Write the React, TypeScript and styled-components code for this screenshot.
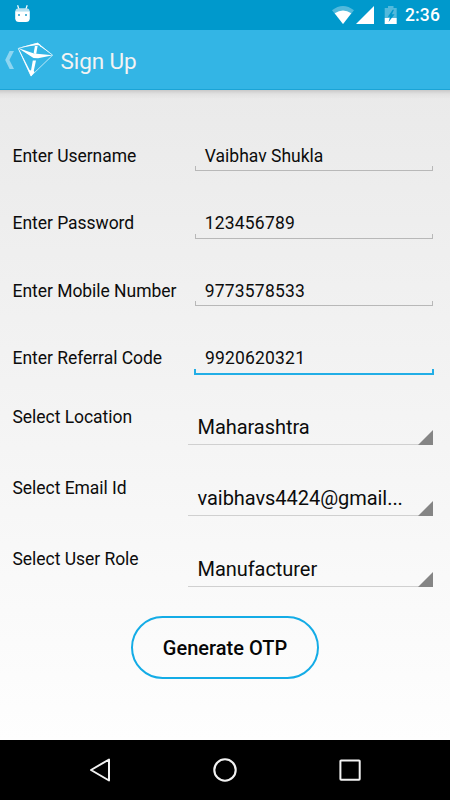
import React from "react";
import styled, { createGlobalStyle } from "styled-components";

const GlobalStyle = createGlobalStyle`
  * { box-sizing: border-box; }
  body { margin: 0; background: #000; font-family: Roboto, "Liberation Sans", sans-serif; }
`;

const Screen = styled.div`
  width: 450px;
  height: 800px;
  display: flex;
  flex-direction: column;
  overflow: hidden;
`;

const StatusBar = styled.header`
  height: 30px;
  flex: none;
  display: flex;
  justify-content: space-between;
  background: #0099cc;
`;

const Clock = styled.span`
  width: 45px;
  color: #fff;
  font-size: 17.5px;
  font-weight: 500;
  line-height: 31px;
  letter-spacing: 0.15px;
`;

const StatusRight = styled.div`
  display: flex;
`;

const ActionBar = styled.div`
  height: 60px;
  flex: none;
  display: flex;
  align-items: center;
  background: #33b5e5;
  border-bottom: 1px solid #1ba4d6;
`;

const Title = styled.h1`
  margin: 0 0 0 5.5px;
  padding-top: 3px;
  color: #f3f3f3;
  font-size: 22.5px;
  font-weight: 400;
  line-height: 28px;
  letter-spacing: -0.08px;
`;

const Content = styled.main`
  flex: 1;
  display: flex;
  flex-direction: column;
  padding: 31px 17px 0 12.5px;
  background:
    linear-gradient(rgba(0, 0, 0, 0.14), rgba(0, 0, 0, 0.04) 4px, transparent 9px),
    linear-gradient(#eaeaea, #fefefe);
`;

const EntryRow = styled.div`
  height: 67.5px;
  display: flex;
  justify-content: space-between;
`;

const SelectRow = styled.div`
  height: 71px;
  display: flex;
  justify-content: space-between;
`;

const Label = styled.label<{ $top: number }>`
  padding-top: ${(p) => p.$top}px;
  color: #0c0c0c;
  font-size: 17.5px;
  line-height: 24px;
  letter-spacing: -0.04px;
  white-space: nowrap;
`;

const Field = styled.div<{ $focused?: boolean }>`
  width: ${(p) => (p.$focused ? 239.5 : 238.5)}px;
  margin-right: ${(p) => (p.$focused ? -0.5 : 0)}px;
  padding-top: 22.5px;
  display: flex;
  flex-direction: column;
`;

const Value = styled.span<{ $inset: number; $numeric: boolean }>`
  height: 22.5px;
  padding-left: ${(p) => p.$inset}px;
  color: #0c0c0c;
  font-size: 17.5px;
  line-height: 24px;
  letter-spacing: ${(p) => (p.$numeric ? 0.18 : 0)}px;
`;

const Bracket = styled.span<{ $focused?: boolean }>`
  height: ${(p) => (p.$focused ? 6 : 5)}px;
  border: 1px solid ${(p) => (p.$focused ? "#22aee6" : "#b8b8b8")};
  border-width: ${(p) => (p.$focused ? "0 2px 2px" : "0 1px 1px")};
`;

const Spinner = styled.div`
  width: 245.5px;
  height: 54px;
  display: flex;
  justify-content: space-between;
  align-items: flex-end;
  border-bottom: 1px solid #d0d0d0;
`;

const Choice = styled.span`
  padding: 0 0 4px 10px;
  color: #0c0c0c;
  font-size: 20px;
  line-height: 26px;
  letter-spacing: -0.05px;
  white-space: nowrap;
`;

const Corner = styled.span`
  width: 15px;
  height: 15px;
  background: #858585;
  clip-path: polygon(100% 0, 100% 100%, 0 100%);
  margin-bottom: -1px;
`;

const OtpButton = styled.button`
  width: 188px;
  height: 63px;
  margin: 12px 0 0 118.5px;
  padding: 0;
  border: 2px solid #14ace6;
  border-radius: 32px;
  background: transparent;
  color: #060606;
  font-family: inherit;
  font-size: 20px;
  font-weight: 500;
  letter-spacing: 0;
`;

const NavBar = styled.nav`
  height: 60px;
  flex: none;
  display: flex;
  justify-content: center;
  align-items: center;
  gap: 95px;
  background: #000;
`;

const entries = [
  { label: "Enter Username", value: "Vaibhav Shukla", numeric: false },
  { label: "Enter Password", value: "123456789", numeric: true },
  { label: "Enter Mobile Number", value: "9773578533", numeric: true },
  { label: "Enter Referral Code", value: "9920620321", numeric: true, focused: true },
];

const selects = [
  { label: "Select Location", value: "Maharashtra" },
  { label: "Select Email Id", value: "vaibhavs4424@gmail..." },
  { label: "Select User Role", value: "Manufacturer" },
];

const AndroidHead = () => (
  <svg width="40" height="30" viewBox="0 0 40 30">
    <path d="M17.6 5.3 19 9.5M27.2 5.3 25.8 9.5" stroke="#fff" strokeWidth="1.2" />
    <path d="M15.3 11.5Q15.5 8.3 19 8.3H26Q29.5 8.3 29.7 11.5Z" fill="#b9e1f0" />
    <path d="M15.2 11.2H29.8V18.5Q29.5 22 26 22H19Q15.5 22 15.2 18.5Z" fill="#fff" />
    <path d="M18 14h2v2h-2zM25 14h2v2h-2z" fill="#55b5d8" />
  </svg>
);

const StatusIcons = () => (
  <svg width="75" height="30" viewBox="330 0 75 30">
    <path d="M332 10.2Q343 1.7 354 10.2L343 24Z" fill="#fff" fillOpacity=".32" />
    <path d="M334.7 13.2Q343 7.7 351.3 13.2L343 24Z" fill="#fff" />
    <path d="M374 6V24H356Z" fill="#fff" />
    <path d="M388 6h5.5v2h3.2v10H384.7V8H388Z" fill="#fff" fillOpacity=".32" />
    <path d="M384.7 18h12v6h-12z" fill="#fff" />
    <path d="M392.7 9.8 387.8 16.8H390L388.6 22 394.6 14.3H391.9L394 9.8Z" fill="#0099cc" />
  </svg>
);

const BackAndLogo = () => (
  <svg width="55" height="59" viewBox="0 30 55 59">
    <path d="M9.6 51H14L9.4 60 14 69H9.6L5.2 60Z" fill="#8ed6f1" />
    <path d="M18.3 48.5 37.5 43.2 52.6 55.2 31 76Z" fill="none" stroke="#fff" strokeOpacity=".75" strokeWidth=".9" />
    <path d="M18 48 37.5 42.8 41 45.3 36.5 45.2 27 46.6Z" fill="#fff" />
    <path d="M18 48 34 53.6 53 55.2 38 58.3 33.5 58Z" fill="#fff" />
    <path d="M34.9 46 37.6 46 36.2 54 33.6 53.5Z" fill="#fff" />
    <path d="M38 43.2 53 55.2 40 46.3Z" fill="#fff" />
    <path d="M18 48.3 20.2 51.5 29.6 70 31 70.5 32.8 60.5 36 60.5 33.8 70.8 34.5 72.3 31 76.5Z" fill="#fff" />
  </svg>
);

export default function App() {
  return (
    <>
      <GlobalStyle />
      <Screen>
        <StatusBar>
          <AndroidHead />
          <StatusRight>
            <StatusIcons />
            <Clock>2:36</Clock>
          </StatusRight>
        </StatusBar>
        <ActionBar>
          <BackAndLogo />
          <Title>Sign Up</Title>
        </ActionBar>
        <Content>
          {entries.map((e) => (
            <EntryRow key={e.label}>
              <Label $top={22.5}>{e.label}</Label>
              <Field $focused={e.focused}>
                <Value $inset={e.focused ? 11 : 10.3} $numeric={e.numeric}>
                  {e.value}
                </Value>
                <Bracket $focused={e.focused} />
              </Field>
            </EntryRow>
          ))}
          {selects.map((s) => (
            <SelectRow key={s.label}>
              <Label $top={14}>{s.label}</Label>
              <Spinner>
                <Choice>{s.value}</Choice>
                <Corner />
              </Spinner>
            </SelectRow>
          ))}
          <OtpButton>Generate OTP</OtpButton>
        </Content>
        <NavBar>
          <svg width="30" height="30" viewBox="85 755 30 30">
            <path d="M109 759.5V780.5L91 770Z" fill="none" stroke="#f2f2f2" strokeWidth="2" strokeLinejoin="round" />
          </svg>
          <svg width="30" height="30" viewBox="210 755 30 30">
            <circle cx="225" cy="770" r="10.7" fill="none" stroke="#f2f2f2" strokeWidth="2.1" />
          </svg>
          <svg width="30" height="30" viewBox="335 755 30 30">
            <rect x="340.4" y="760.4" width="19.3" height="19.3" rx=".7" fill="none" stroke="#f2f2f2" strokeWidth="2" />
          </svg>
        </NavBar>
      </Screen>
    </>
  );
}
